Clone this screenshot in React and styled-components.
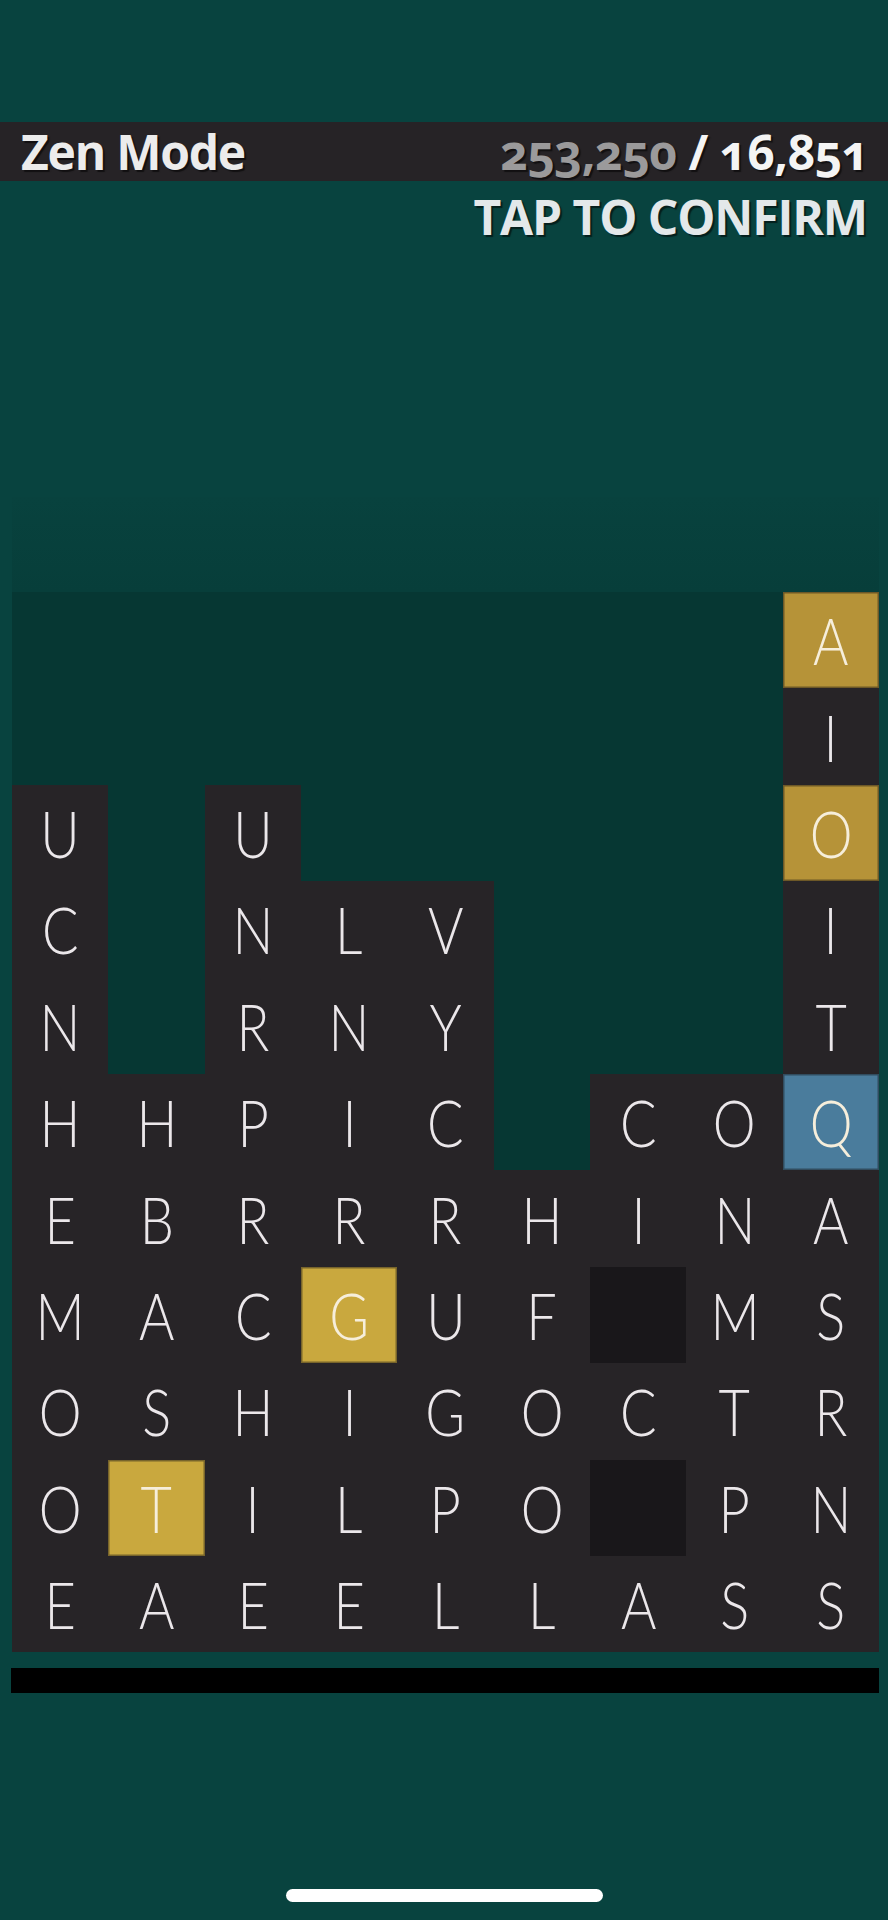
import React from "react";
import styled, { createGlobalStyle } from "styled-components";

const GlobalStyle = createGlobalStyle`
  html, body { margin: 0; padding: 0; background: #08433f; }
  body { width: 888px; height: 1920px; overflow: hidden; }
  #root { width: 888px; height: 1920px; }
`;

const Screen = styled.div`
  width: 888px;
  height: 1920px;
  background: #08433f;
  display: flex;
  flex-direction: column;
  font-family: "Open Sans", "Liberation Sans", sans-serif;
`;

const TopBar = styled.div`
  margin-top: 122px;
  height: 59px;
  background: #262326;
  display: flex;
  align-items: center;
  justify-content: space-between;
  padding: 0 19px 0 21px;
`;

const HeadText = styled.span`
  font-family: "Open Sans", "Liberation Sans", sans-serif;
  font-weight: 700;
  font-stretch: 100%;
  font-size: 48px;
  line-height: 1;
  letter-spacing: ${(p) => p.$spacing || "-0.5px"};
  color: ${(p) => p.$color || "#ececec"};
  text-shadow: 2px 2px 1px rgba(0, 0, 0, 0.55);
  white-space: pre;
`;

const Score = styled.div`
  display: flex;
  align-items: baseline;
  font-variant-numeric: oldstyle-nums;
`;

const ConfirmRow = styled.div`
  display: flex;
  justify-content: flex-end;
  padding: 12px 21px 0 0;
`;

const PreviewBand = styled.div`
  margin: 256px 9px 0 12px;
  height: 95px;
  background: linear-gradient(#08423e, #073e3a);
`;

const Board = styled.div`
  margin: 0 9px 0 12px;
  display: grid;
  grid-template-columns: repeat(9, 1fr);
  grid-auto-rows: 96.4px;
  background: #063733;
`;

const tileBg = {
  empty: "transparent",
  dark: "#272427",
  void: "#19171a",
  gold: "#c9a83e",
  goldDim: "#b69338",
  blue: "#4a7c9c",
};

const Tile = styled.div`
  background: ${(p) => tileBg[p.$kind]};
  display: flex;
  align-items: center;
  justify-content: center;
  box-shadow: ${(p) =>
    p.$kind === "gold" || p.$kind === "goldDim" || p.$kind === "blue"
      ? "inset 0 0 0 1.5px rgba(20, 18, 20, 0.45)"
      : "none"};
`;

const Letter = styled.span`
  font-family: "Lato", "Open Sans", sans-serif;
  font-weight: 300;
  font-size: 66px;
  line-height: 1;
  color: ${(p) => (p.$onColor ? "#f6eedb" : "#ebe7ea")};
  transform: scaleX(0.82);
  display: inline-block;
`;

const BottomBar = styled.div`
  margin: 16px 9px 0 11px;
  height: 25px;
  background: #000;
`;

const HomeIndicator = styled.div`
  align-self: center;
  margin-top: 196px;
  width: 317px;
  height: 13px;
  border-radius: 7px;
  background: #fff;
`;

const rows = [
  ["", "", "", "", "", "", "", "", "G:A"],
  ["", "", "", "", "", "", "", "", "I"],
  ["U", "", "U", "", "", "", "", "", "G:O"],
  ["C", "", "N", "L", "V", "", "", "", "I"],
  ["N", "", "R", "N", "Y", "", "", "", "T"],
  ["H", "H", "P", "I", "C", "", "C", "O", "b:Q"],
  ["E", "B", "R", "R", "R", "H", "I", "N", "A"],
  ["M", "A", "C", "g:G", "U", "F", "#", "M", "S"],
  ["O", "S", "H", "I", "G", "O", "C", "T", "R"],
  ["O", "g:T", "I", "L", "P", "O", "#", "P", "N"],
  ["E", "A", "E", "E", "L", "L", "A", "S", "S"],
];

function parse(token) {
  if (token === "") return { kind: "empty", ch: "" };
  if (token === "#") return { kind: "void", ch: "" };
  if (token.startsWith("g:")) return { kind: "gold", ch: token.slice(2) };
  if (token.startsWith("G:")) return { kind: "goldDim", ch: token.slice(2) };
  if (token.startsWith("b:")) return { kind: "blue", ch: token.slice(2) };
  return { kind: "dark", ch: token };
}

export default function App() {
  return (
    <>
      <GlobalStyle />
      <Screen>
        <TopBar>
          <HeadText $spacing="-1.25px">Zen Mode</HeadText>
          <Score>
            <HeadText $color="#9b9a9b">253,250</HeadText>
            <HeadText $color="#f4f4f4"> / 16,851</HeadText>
          </Score>
        </TopBar>
        <ConfirmRow>
          <HeadText $color="#e3e8ea" $spacing="-1.1px">TAP TO CONFIRM</HeadText>
        </ConfirmRow>
        <PreviewBand />
        <Board>
          {rows.flatMap((row, r) =>
            row.map((token, c) => {
              const { kind, ch } = parse(token);
              return (
                <Tile key={`${r}-${c}`} $kind={kind}>
                  {ch && <Letter $onColor={kind !== "dark"}>{ch}</Letter>}
                </Tile>
              );
            })
          )}
        </Board>
        <BottomBar />
        <HomeIndicator />
      </Screen>
    </>
  );
}
